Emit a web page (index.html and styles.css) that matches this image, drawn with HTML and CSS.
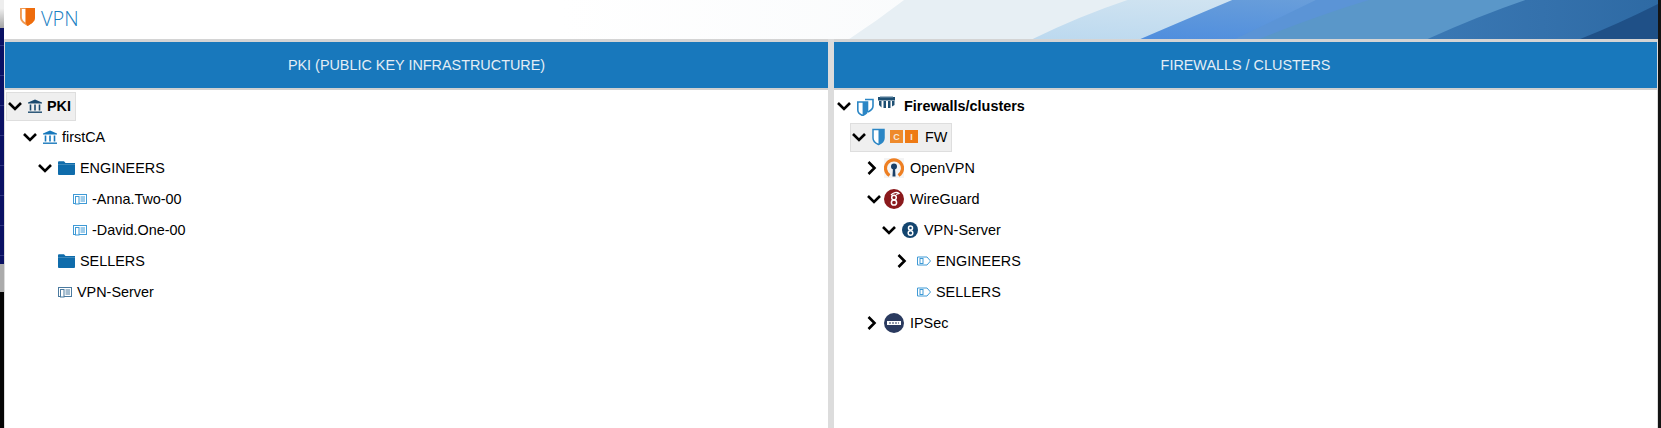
FILE: index.html
```html
<!doctype html>
<html lang="en">

<head>
    <title>VPN</title>
    <meta charset="UTF-8" />
    <link rel="stylesheet" href="styles.css">
</head>

<body>
    <div class="strip-left">
        <div class="seg-grey"></div>
        <div class="seg-navy"></div>
        <div class="seg-mid"></div>
        <div class="seg-black"></div>
    </div>

    <div class="app">
        <header class="topbar">
            <div class="brand">
                <svg class="logo" viewBox="0 0 16 19">
                    <path d="M0 0H16V10C16 14 12 17 8 19C4 17 0 14 0 10Z" fill="#f09a52" />
                    <path d="M2 1H6V15.500C3.500 14 2 12 2 9.500Z" fill="#fff" />
                    <path d="M6 0H16V10C16 14 12 17 8 19L6 15.500Z" fill="#ee6c0c" />
                </svg>
                <span class="brand-name">VPN</span>
            </div>
            <svg class="banner" viewBox="0 0 1100 39" preserveAspectRatio="none">
                <defs>
                    <linearGradient id="fade" x1="0" x2="1" y1="0" y2="0">
                        <stop offset="0" stop-color="#fff" />
                        <stop offset="1" stop-color="#eef3f6" />
                    </linearGradient>
                    <linearGradient id="pale" x1="0" x2="1" y1="1" y2="0">
                        <stop offset="0" stop-color="#bcd9ef" />
                        <stop offset="1" stop-color="#dbe9f2" />
                    </linearGradient>
                    <linearGradient id="mid" x1="0" x2="1" y1="1" y2="0">
                        <stop offset="0" stop-color="#4f8ede" />
                        <stop offset="1" stop-color="#76a6d8" />
                    </linearGradient>
                    <linearGradient id="deep" x1="0" x2="1" y1="0" y2="0">
                        <stop offset="0" stop-color="#3a78b4" />
                        <stop offset="1" stop-color="#2e6aa4" />
                    </linearGradient>
                </defs>
                <rect width="1100" height="39" fill="url(#fade)" />
                <path d="M289 39Q318 20 344 0H1100V39Z" fill="#e7eff4" />
                <path d="M473 39Q520 16 568 0H1100V39Z" fill="url(#pale)" />
                <path d="M581 39Q630 18 673 0H1100V39Z" fill="url(#mid)" />
                <path d="M676 39Q720 18 757 0H1100V39Z" fill="#5b94d6" />
                <path d="M700 39Q760 15 810 0H1100V39Z" fill="#5a97c9" />
                <path d="M869 39Q920 16 967 0H1100V39Z" fill="url(#deep)" />
                <path d="M1022 39Q1060 24 1100 4V39Z" fill="#1f5087" />
            </svg>
        </header>

        <main class="panels">
            <section class="panel">
                <h2 class="panel-title">PKI (PUBLIC KEY INFRASTRUCTURE)</h2>
                <ul class="tree">
                    <li>
                        <div class="node selected">
                            <svg class="toggle"><use href="#ic-down" /></svg>
                            <svg class="icon ic-dark"><use href="#ic-bank" /></svg>
                            <b>PKI</b>
                        </div>
                        <ul>
                            <li>
                                <div class="node">
                                    <svg class="toggle"><use href="#ic-down" /></svg>
                                    <svg class="icon ic-blue"><use href="#ic-bank" /></svg>
                                    <span>firstCA</span>
                                </div>
                                <ul>
                                    <li>
                                        <div class="node">
                                            <svg class="toggle"><use href="#ic-down" /></svg>
                                            <svg class="icon wide ic-folder"><use href="#ic-folder" /></svg>
                                            <span>ENGINEERS</span>
                                        </div>
                                        <ul>
                                            <li>
                                                <div class="node">
                                                    <i class="toggle"></i>
                                                    <svg class="icon ic-light"><use href="#ic-cert" /></svg>
                                                    <span>-Anna.Two-00</span>
                                                </div>
                                            </li>
                                            <li>
                                                <div class="node">
                                                    <i class="toggle"></i>
                                                    <svg class="icon ic-light"><use href="#ic-cert" /></svg>
                                                    <span>-David.One-00</span>
                                                </div>
                                            </li>
                                        </ul>
                                    </li>
                                    <li>
                                        <div class="node">
                                            <i class="toggle"></i>
                                            <svg class="icon wide ic-folder"><use href="#ic-folder" /></svg>
                                            <span>SELLERS</span>
                                        </div>
                                    </li>
                                    <li>
                                        <div class="node">
                                            <i class="toggle"></i>
                                            <svg class="icon ic-slate"><use href="#ic-cert" /></svg>
                                            <span>VPN-Server</span>
                                        </div>
                                    </li>
                                </ul>
                            </li>
                        </ul>
                    </li>
                </ul>
            </section>

            <section class="panel">
                <h2 class="panel-title">FIREWALLS / CLUSTERS</h2>
                <ul class="tree">
                    <li>
                        <div class="node">
                            <svg class="toggle"><use href="#ic-down" /></svg>
                            <svg class="icon-cluster" viewBox="0 0 42 20">
                                <path d="M8 3.500H16V10C16 12.500 14 14.500 11 16" fill="#fff" stroke="#2b86c5" stroke-width="1.600" />
                                <path d="M.8 6H10.500V14C10.500 16.500 8 18.500 5.600 19.500C3 18.500 .8 16.500 .8 14Z" fill="#fff" stroke="#2b86c5" stroke-width="1.600" />
                                <path d="M5.600 6H10.500V14C10.500 16.500 8 18.500 5.600 19.500Z" fill="#2b86c5" />
                                <path d="M21 1H38V4.500H21Z" fill="#1d4f73" />
                                <path d="M23 .8H36" stroke="#8fa9bc" stroke-width="1.200" />
                                <path d="M22 5V9L24.500 11.500V5ZM26.500 5V12H29V5ZM31 5V12H33.500V5ZM35 5V10.500L37.500 9V5Z" fill="#1d4f73" />
                            </svg>
                            <b>Firewalls/clusters</b>
                        </div>
                        <ul>
                            <li>
                                <div class="node selected">
                                    <svg class="toggle"><use href="#ic-down" /></svg>
                                    <svg class="icon-fw" viewBox="0 0 13 18">
                                        <path d="M1 1.500H12V10C12 13.500 9 15.500 6.500 16.500C4 15.500 1 13.500 1 10Z" fill="#fff" stroke="#2b86c5" stroke-width="1.500" />
                                        <path d="M6.500 1.500H12V10C12 13.500 9 15.500 6.500 16.500Z" fill="#2b86c5" />
                                    </svg>
                                    <span class="badge badge-c">C</span>
                                    <span class="badge badge-i">I</span>
                                    <span class="fw-name">FW</span>
                                </div>
                                <ul>
                                    <li>
                                        <div class="node">
                                            <svg class="toggle"><use href="#ic-right" /></svg>
                                            <svg class="icon-round" viewBox="0 0 20 20">
                                                <rect width="20" height="20" fill="#f4f4f4" />
                                                <path d="M5.500 17.500A8.500 8.500 0 1 1 14.500 17.500" fill="none" stroke="#ee7f22" stroke-width="3.200" />
                                                <circle cx="10" cy="8.500" r="3" fill="#1a3f66" />
                                                <path d="M9 10H11L11.500 18.500H8.500Z" fill="#1a3f66" />
                                            </svg>
                                            <span>OpenVPN</span>
                                        </div>
                                    </li>
                                    <li>
                                        <div class="node">
                                            <svg class="toggle"><use href="#ic-down" /></svg>
                                            <svg class="icon-round" viewBox="0 0 20 20">
                                                <circle cx="10" cy="10" r="10" fill="#8a191c" />
                                                <circle cx="10" cy="8.500" r="2.300" fill="none" stroke="#fff" stroke-width="1.500" />
                                                <circle cx="10" cy="13.500" r="2.600" fill="none" stroke="#fff" stroke-width="1.500" />
                                                <path d="M7 6C9 3.500 13 2.500 15 4.500L12 5.500" fill="none" stroke="#fff" stroke-width="1.300" />
                                            </svg>
                                            <span>WireGuard</span>
                                        </div>
                                        <ul>
                                            <li>
                                                <div class="node">
                                                    <svg class="toggle"><use href="#ic-down" /></svg>
                                                    <svg class="icon-small" viewBox="0 0 16 16">
                                                        <circle cx="8" cy="8" r="8" fill="#13456f" />
                                                        <circle cx="8.500" cy="6" r="2" fill="none" stroke="#fff" stroke-width="1.500" />
                                                        <circle cx="8.500" cy="11" r="2.300" fill="none" stroke="#fff" stroke-width="1.500" />
                                                    </svg>
                                                    <span>VPN-Server</span>
                                                </div>
                                                <ul>
                                                    <li>
                                                        <div class="node">
                                                            <svg class="toggle"><use href="#ic-right" /></svg>
                                                            <svg class="icon ic-light"><use href="#ic-tag" /></svg>
                                                            <span>ENGINEERS</span>
                                                        </div>
                                                    </li>
                                                    <li>
                                                        <div class="node">
                                                            <i class="toggle"></i>
                                                            <svg class="icon ic-light"><use href="#ic-tag" /></svg>
                                                            <span>SELLERS</span>
                                                        </div>
                                                    </li>
                                                </ul>
                                            </li>
                                        </ul>
                                    </li>
                                    <li>
                                        <div class="node">
                                            <svg class="toggle"><use href="#ic-right" /></svg>
                                            <svg class="icon-round" viewBox="0 0 20 20">
                                                <circle cx="10" cy="10" r="10" fill="#2a3a5f" />
                                                <rect x="3" y="8" width="14" height="4" fill="#fff" />
                                                <path d="M5 10H15" stroke="#2a3a5f" stroke-width="1" stroke-dasharray="2 1" />
                                            </svg>
                                            <span>IPSec</span>
                                        </div>
                                    </li>
                                </ul>
                            </li>
                        </ul>
                    </li>
                </ul>
            </section>
        </main>
    </div>

    <div class="strip-right"></div>

    <!-- shared icons -->
    <svg class="sprite">
        <symbol id="ic-down" viewBox="0 0 16 16">
            <path d="M2 5L8 11L14 5" fill="none" stroke="#000" stroke-width="2.600" />
        </symbol>
        <symbol id="ic-right" viewBox="0 0 16 16">
            <path d="M2.500 2L8.500 8L2.500 14" fill="none" stroke="#000" stroke-width="2.600" />
        </symbol>
        <symbol id="ic-bank" viewBox="0 0 14 14">
            <path d="M7 .5L14 3.500V4.500H0V3.500Z" fill="currentColor" />
            <path d="M2.500 5.500V11.500M7 5.500V11.500M11.500 5.500V11.500" stroke="currentColor" stroke-width="1.600" />
            <path d="M0 13.200H14" stroke="currentColor" stroke-width="1.400" />
        </symbol>
        <symbol id="ic-folder" viewBox="0 0 17 14">
            <path d="M0 1.500C0 .8 .5 .3 1.200 .3H6L7.500 2H17V13C17 13.500 16.500 14 16 14H1C.5 14 0 13.500 0 13Z" fill="currentColor" />
            <path d="M0 3.300H17" stroke="#fff" stroke-width=".5" opacity=".5" />
        </symbol>
        <symbol id="ic-cert" viewBox="0 0 14 14">
            <rect x=".5" y="2.500" width="13" height="9" fill="none" stroke="currentColor" />
            <rect x="2.500" y="4.500" width="3.500" height="7.500" fill="#fff" stroke="currentColor" />
            <path d="M7.500 5H12M7.500 7H12M7.500 9H12" stroke="currentColor" />
        </symbol>
        <symbol id="ic-tag" viewBox="0 0 14 14">
            <path d="M.5 3H10L13.500 7L10 11H.5Z" fill="none" stroke="currentColor" />
            <rect x="3" y="4.500" width="3" height="5" fill="none" stroke="currentColor" />
        </symbol>
    </svg>
</body>

</html>
```

FILE: styles.css
```css
html, body {
    height: 100%;
}

body {
    display: flex;
    margin: 0;
    overflow: hidden;
    background: #fff;
    color: #000;
    font-family: "Liberation Sans", Arial, sans-serif;
    font-size: 14.4px;
}

.sprite {
    display: none;
}

/* bits of the desktop showing either side of the window */
.strip-left {
    display: flex;
    flex-direction: column;
    flex: 0 0 4px;
}

.seg-grey {
    height: 28px;
    background: linear-gradient(#eee 30%, #a4a4a4);
}

.seg-navy {
    height: 236px;
    background: repeating-linear-gradient(#0a1164 0 17px, #2c3480 17px 18px, #0a1164 18px 30px);
}

.seg-mid {
    height: 28px;
    background: #ababab;
}

.seg-black {
    flex: 1;
    background: #050505;
}

.strip-right {
    flex: 0 0 3px;
    background: #141414;
}

.app {
    display: flex;
    flex-direction: column;
    flex: 1;
    min-width: 0;
}

.topbar {
    display: flex;
    flex: 0 0 39px;
    background: #fff;
}

.brand {
    display: flex;
    align-items: center;
    flex: 0 0 557px;
    gap: 6px;
    padding: 0 0 3px 16px;
    box-sizing: border-box;
}

.logo {
    width: 15px;
    height: 18px;
    margin-bottom: 3px;
}

.brand-name {
    color: #1a80c2;
    font-family: "Open Sans", sans-serif;
    font-size: 20px;
    font-weight: 300;
}

.banner {
    flex: 1;
    min-width: 0;
    height: 39px;
}

.panels {
    display: grid;
    grid-template-columns: 823px 823px;
    gap: 6px;
    flex: 1;
    background: #dcdcdc;
    padding: 0 1px;
    min-height: 0;
}

.panel {
    background: #fff;
    min-width: 0;
}

.panel-title {
    display: flex;
    align-items: center;
    justify-content: center;
    height: 46px;
    margin: 0;
    border-top: 3px solid #d4d4d4;
    border-bottom: 2px solid #d0d0d0;
    background: #1878bc;
    color: #e4eef6;
    font-size: 14.4px;
    font-weight: normal;
}

.tree, .tree ul {
    margin: 0;
    padding: 0;
    list-style: none;
}

.tree {
    padding-left: 2px;
}

.tree ul {
    padding-left: 15px;
}

.node {
    display: flex;
    align-items: center;
    width: max-content;
    height: 31px;
    gap: 5px;
    white-space: nowrap;
    box-sizing: border-box;
}

.node.selected {
    height: 29px;
    margin: 2px 0 0 -1px;
    padding: 0 4px 2px 0;
    border: 1px solid #dedede;
    background: #efefef;
}

.toggle {
    display: block;
    flex: 0 0 16px;
    width: 16px;
    height: 16px;
}

.icon {
    display: block;
    width: 14px;
    height: 14px;
}

.icon.wide {
    width: 17px;
}

.ic-dark { color: #1b4a6e; }
.ic-blue { color: #1878bc; }
.ic-folder { color: #0f6cab; }
.ic-light { color: #3f9ad6; }
.ic-slate { color: #4b7a9f; }

.icon-cluster {
    width: 42px;
    height: 20px;
}

.icon-fw {
    width: 13px;
    height: 18px;
}

.badge {
    display: flex;
    align-items: center;
    justify-content: center;
    width: 13px;
    height: 13px;
    color: #f6e8dc;
    font-size: 9px;
    font-weight: bold;
}

.badge-c {
    background: #ee8a2c;
}

.badge-i {
    margin-left: -3px;
    background: #ee7a14;
}

.fw-name {
    margin-left: 2px;
}

.icon-round {
    width: 20px;
    height: 20px;
    margin: 0 1px 0 -3px;
}

.icon-small {
    width: 16px;
    height: 16px;
    margin-right: 1px;
}
```
